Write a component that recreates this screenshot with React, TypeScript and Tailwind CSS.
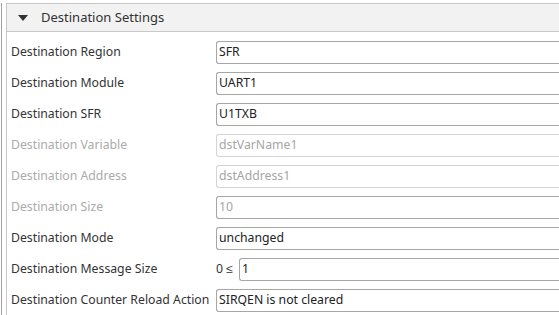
import React from "react";

type Row = {
  label: string;
  value: string;
  disabled?: boolean;
  darkBorder?: boolean;
  prefix?: string;
};

const rows: Row[] = [
  { label: "Destination Region", value: "SFR" },
  { label: "Destination Module", value: "UART1" },
  { label: "Destination SFR", value: "U1TXB" },
  { label: "Destination Variable", value: "dstVarName1", disabled: true },
  { label: "Destination Address", value: "dstAddress1", disabled: true },
  { label: "Destination Size", value: "10", disabled: true, darkBorder: true },
  { label: "Destination Mode", value: "unchanged" },
  { label: "Destination Message Size", value: "1", prefix: "0 ≤" },
  { label: "Destination Counter Reload Action", value: "SIRQEN is not cleared" },
];

function Field({ row }: { row: Row }) {
  const border = row.disabled && !row.darkBorder ? "border-[#d4d4d4]" : "border-[#a6a6a6]";
  return (
    <div className="flex items-center h-[23px]">
      <div
        className={`w-[209px] shrink-0 pl-[4px] whitespace-nowrap ${row.disabled ? "text-[#ababab]" : "text-[#333333]"}`}
      >
        {row.label}
      </div>
      {row.prefix && <span className="text-[#333333] w-[23px] shrink-0">{row.prefix}</span>}
      <div
        className={`flex-1 h-[23px] border ${border} border-r-0 rounded-l-[3px] pl-[2px] flex items-center ${row.disabled ? "text-[#a6a6a6]" : "text-[#222222]"}`}
      >
        {row.value}
      </div>
    </div>
  );
}

export default function App() {
  return (
    <div
      className="w-[559px] h-[315px] bg-white overflow-hidden pl-[1px] text-[12.25px]"
      style={{ fontFamily: '"Noto Sans", sans-serif' }}
    >
      <div className="h-full border-l border-[#a0a0a0] pl-[4px]">
        <div className="h-full mt-[3px] border-l border-t border-[#c8c8c8]">
          <div className="h-[28px] bg-[#f2f2f2] border-b border-[#c8c8c8] flex items-center pt-[1px] text-[#333333]">
            <svg width="10" height="7" viewBox="0 0 10 7" className="ml-[11px] mr-[13px]">
              <path d="M0 0 H10 L5 6 Z" fill="#333333" />
            </svg>
            <span className="text-[13px]">Destination Settings</span>
          </div>
          <div className="flex flex-col gap-[8px] pt-[9px]">
            {rows.map((r) => (
              <Field key={r.label} row={r} />
            ))}
          </div>
        </div>
      </div>
    </div>
  );
}
